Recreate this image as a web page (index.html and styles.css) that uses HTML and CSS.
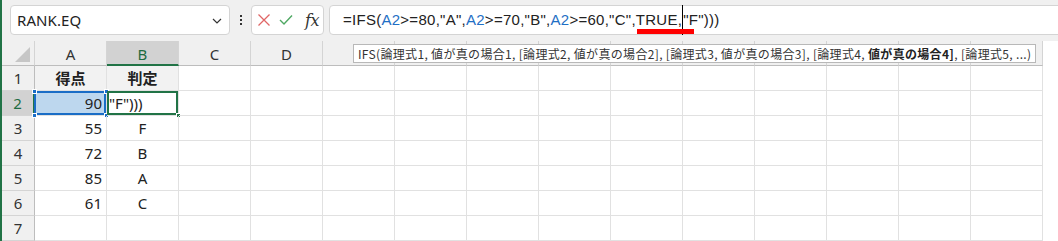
FILE: index.html
```html
<!DOCTYPE html>
<html lang="ja">
<head>
<meta charset="utf-8">
<link rel="stylesheet" href="styles.css">
</head>
<body>
<div class="app">
  <div class="toolbar">
    <div class="namebox">
      <span class="name">RANK.EQ</span>
      <svg class="chev" width="10" height="6" viewBox="0 0 10 6"><path d="M1 1 L5 5 L9 1" fill="none" stroke="#333" stroke-width="1.2"/></svg>
    </div>
    <div class="dots"><i></i><i></i><i></i></div>
    <div class="fxbox">
      <svg width="14" height="14" viewBox="0 0 14 14"><path d="M1.5 1.5 L12.5 12.5 M12.5 1.5 L1.5 12.5" stroke="#e06666" stroke-width="1.3" fill="none"/></svg>
      <svg width="14" height="12" viewBox="0 0 14 12"><path d="M1 6 L5 10 L13 1.5" stroke="#4fa863" stroke-width="1.4" fill="none"/></svg>
      <span class="fx">fx</span>
    </div>
    <div class="formula">
      <span class="ftext">=IFS(<span class="ref">A2</span>&gt;=80,"A",<span class="ref">A2</span>&gt;=70,"B",<span class="ref">A2</span>&gt;=60,"C",<span class="mark">TRUE,</span><span class="caret"></span>"F")))</span>
    </div>
  </div>

  <div class="sheet">
    <div class="corner"><span class="tri"></span></div>
    <div class="ch">A</div>
    <div class="ch sel">B</div>
    <div class="ch">C</div>
    <div class="ch">D</div>
    <div class="ch"></div><div class="ch"></div><div class="ch"></div><div class="ch"></div><div class="ch"></div><div class="ch"></div><div class="ch"></div><div class="ch"></div><div class="ch"></div><div class="ch"></div>

    <div class="rh">1</div>
    <div class="c hd">得点</div><div class="c hd">判定</div>
    <div class="c"></div><div class="c"></div><div class="c"></div><div class="c"></div><div class="c"></div><div class="c"></div><div class="c"></div><div class="c"></div><div class="c"></div><div class="c"></div><div class="c"></div><div class="c"></div>

    <div class="rh rsel">2</div>
    <div class="c num refcell">90<i class="h tl"></i><i class="h tr"></i><i class="h bl"></i><i class="h br"></i></div>
    <div class="c active">"F")))<i class="gh"></i></div>
    <div class="c"></div><div class="c"></div><div class="c"></div><div class="c"></div><div class="c"></div><div class="c"></div><div class="c"></div><div class="c"></div><div class="c"></div><div class="c"></div><div class="c"></div><div class="c"></div>

    <div class="rh">3</div>
    <div class="c num">55</div><div class="c ctr">F</div>
    <div class="c"></div><div class="c"></div><div class="c"></div><div class="c"></div><div class="c"></div><div class="c"></div><div class="c"></div><div class="c"></div><div class="c"></div><div class="c"></div><div class="c"></div><div class="c"></div>

    <div class="rh">4</div>
    <div class="c num">72</div><div class="c ctr">B</div>
    <div class="c"></div><div class="c"></div><div class="c"></div><div class="c"></div><div class="c"></div><div class="c"></div><div class="c"></div><div class="c"></div><div class="c"></div><div class="c"></div><div class="c"></div><div class="c"></div>

    <div class="rh">5</div>
    <div class="c num">85</div><div class="c ctr">A</div>
    <div class="c"></div><div class="c"></div><div class="c"></div><div class="c"></div><div class="c"></div><div class="c"></div><div class="c"></div><div class="c"></div><div class="c"></div><div class="c"></div><div class="c"></div><div class="c"></div>

    <div class="rh">6</div>
    <div class="c num">61</div><div class="c ctr">C</div>
    <div class="c"></div><div class="c"></div><div class="c"></div><div class="c"></div><div class="c"></div><div class="c"></div><div class="c"></div><div class="c"></div><div class="c"></div><div class="c"></div><div class="c"></div><div class="c"></div>

    <div class="rh">7</div>
    <div class="c"></div><div class="c"></div>
    <div class="c"></div><div class="c"></div><div class="c"></div><div class="c"></div><div class="c"></div><div class="c"></div><div class="c"></div><div class="c"></div><div class="c"></div><div class="c"></div><div class="c"></div><div class="c"></div>
  </div>

  <div class="tip">IFS(論理式1, 値が真の場合1, [論理式2, 値が真の場合2], [論理式3, 値が真の場合3], [論理式4, <b>値が真の場合4]</b>, [論理式5, ...)</div>
</div>
</body>
</html>
```

FILE: styles.css
```css
* { box-sizing: border-box; }
html, body { margin: 0; padding: 0; }
body {
  width: 1058px;
  height: 241px;
  overflow: hidden;
  background: #ffffff;
  font-family: "Noto Sans", "Noto Sans CJK JP", sans-serif;
  color: #222;
}
.app {
  position: relative;
  height: 241px;
  border-left: 2px solid #217346;
  background: #f0f0f0;
  overflow: hidden;
}
.toolbar {
  display: flex;
  align-items: center;
  height: 41px;
  padding: 5px 0 6px 8px;
}
.namebox {
  width: 220px;
  height: 30px;
  background: #fff;
  border: 1px solid #d4d4d4;
  border-radius: 4px;
  display: flex;
  align-items: center;
  justify-content: space-between;
  padding: 0 7px 0 6px;
}
.name {
  font-size: 15px;
  color: #222;
  letter-spacing: 0.1px;
}
.chev { margin-top: 1px; }
.dots {
  width: 21px;
  height: 30px;
  display: flex;
  flex-direction: column;
  align-items: center;
  justify-content: center;
  gap: 2px;
}
.dots i {
  display: block;
  width: 2px;
  height: 2px;
  background: #333;
}
.fxbox {
  width: 73px;
  height: 30px;
  background: #fff;
  border: 1px solid #d4d4d4;
  border-radius: 4px;
  display: flex;
  align-items: center;
  gap: 8px;
  padding-left: 5px;
}
.fx {
  font-family: "DejaVu Serif", "Liberation Serif", serif;
  font-style: italic;
  font-size: 16px;
  color: #333;
  margin-left: 4px;
  letter-spacing: -0.5px;
}
.formula {
  flex: 1;
  margin-left: 5px;
  margin-right: -6px;
  height: 30px;
  background: #fff;
  border: 1px solid #d4d4d4;
  border-radius: 4px 0 0 4px;
  display: flex;
  align-items: center;
  padding-left: 13px;
}
.ftext {
  font-family: "Liberation Sans", "Noto Sans", sans-serif;
  font-size: 15px;
  color: #222;
  white-space: nowrap;
  letter-spacing: 0.27px;
}
.ref { color: #1f6fc5; }
.mark { position: relative; }
.mark::after {
  content: "";
  position: absolute;
  left: 1px;
  right: -12px;
  top: 18px;
  height: 5px;
  background: #ff0000;
}
.caret {
  display: inline-block;
  width: 1px;
  height: 30px;
  background: #000;
  vertical-align: middle;
  margin: -8px 0 -6px 0;
}

.sheet {
  display: grid;
  grid-template-columns: 33px repeat(14, 72px);
  grid-template-rows: 25px repeat(7, 25px);
  background: #fff;
}
.corner {
  background: #f0f0f0;
  border-right: 1px solid #d4d4d4;
  border-bottom: 1px solid #bdbdbd;
  position: relative;
}
.tri {
  position: absolute;
  right: 4px;
  bottom: 3px;
  width: 0;
  height: 0;
  border-left: 15px solid transparent;
  border-bottom: 15px solid #c6c6c6;
}
.ch {
  background: #f0f0f0;
  border-right: 1px solid #d4d4d4;
  border-bottom: 1px solid #bdbdbd;
  font-size: 15px;
  color: #333;
  text-align: center;
  line-height: 24px;
  padding-top: 1px;
}
.ch.sel {
  background: #d2d2d2;
  color: #1e6b41;
  border-bottom: 2px solid #217346;
}
.rh {
  background: #f0f0f0;
  border-right: 1px solid #bdbdbd;
  border-bottom: 1px solid #d4d4d4;
  font-size: 15px;
  color: #333;
  text-align: center;
  line-height: 24px;
}
.rh.rsel {
  background: #d2d2d2;
  color: #1e6b41;
  border-right: 2px solid #217346;
}
.c {
  position: relative;
  border-right: 1px solid #e1e1e1;
  border-bottom: 1px solid #e1e1e1;
  font-family: "Noto Sans", "Noto Sans CJK JP", sans-serif;
  font-size: 15px;
  color: #222;
  line-height: 24px;
  white-space: nowrap;
}
.c.hd {
  background: #f2f2f2;
  font-family: "Noto Sans CJK JP", sans-serif;
  font-weight: bold;
  text-align: center;
  font-size: 15px;
}
.c.num { text-align: right; padding-right: 4px; }
.c.ctr { text-align: center; }
.c.refcell {
  background: #bdd7ee;
  box-shadow: inset 0 0 0 2px #1a6dc6;
  margin-left: -1px;
}
.c.active {
  box-shadow: inset 0 0 0 2px #217346;
  padding-left: 2px;
}
.h {
  position: absolute;
  width: 5px;
  height: 5px;
  background: #1a6dc6;
  border: 1px solid #fff;
}
.h.tl { left: -2px; top: -2px; }
.h.tr { right: -3px; top: -2px; }
.h.bl { left: -2px; bottom: -3px; }
.h.br { right: -3px; bottom: -3px; }
.gh {
  position: absolute;
  right: -3px;
  bottom: -3px;
  width: 5px;
  height: 5px;
  background: #217346;
  border: 1px solid #fff;
}
.tip {
  position: absolute;
  left: 351px;
  top: 44px;
  height: 19px;
  padding: 0 4px;
  background: #fff;
  border: 1px solid #b8b8b8;
  font-family: "Noto Sans CJK JP", sans-serif;
  font-size: 12px;
  line-height: 17px;
  color: #333;
  white-space: nowrap;
  letter-spacing: 0.33px;
}
.tip b { font-weight: bold; color: #222; }
```
